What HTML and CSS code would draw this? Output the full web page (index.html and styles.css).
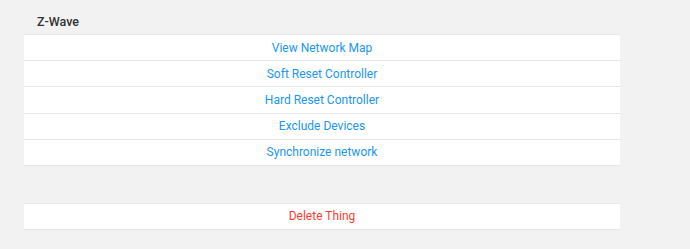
FILE: index.html
```html
<!DOCTYPE html>
<html lang="en">
<head>
  <meta charset="UTF-8">
  <title>Z-Wave</title>
  <link rel="stylesheet" href="styles.css">
</head>
<body>

<div class="page">
  <h3 class="section-title">Z-Wave</h3>

  <div class="list">
    <a class="row">View Network Map</a>
    <a class="row">Soft Reset Controller</a>
    <a class="row">Hard Reset Controller</a>
    <a class="row">Exclude Devices</a>
    <a class="row">Synchronize network</a>
  </div>

  <div class="list danger-list">
    <a class="row danger">Delete Thing</a>
  </div>
</div>

</body>
</html>
```

FILE: styles.css
```css
* { margin: 0; padding: 0; box-sizing: border-box; }

body {
  font-family: Roboto, 'Noto Sans', sans-serif;
  background: #f2f2f2;
  color: #333;
  font-size: 12px;
}

.page {
  width: 596px;
  margin-left: 24px;
  padding-top: 14px;
}

.section-title {
  font-size: 12.5px;
  font-weight: 500;
  color: #333;
  padding-left: 13px;
  height: 20px;
  line-height: 16px;
}

.list {
  background: #fff;
  border-top: 1px solid #e8e8e8;
  display: flex;
  flex-direction: column;
}

.row {
  display: flex;
  align-items: center;
  justify-content: center;
  height: 26.2px;
  border-bottom: 1px solid #e6e6e6;
  color: #2196f3;
  text-decoration: none;
  cursor: pointer;
}

.danger-list { margin-top: 37px; }

.row.danger {
  color: #ff3b30;
  height: 26px;
}
```
